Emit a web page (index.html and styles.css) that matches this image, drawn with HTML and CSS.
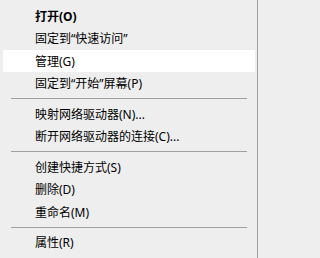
FILE: index.html
```html
<!DOCTYPE html>
<html lang="zh-CN">
<head>
<meta charset="utf-8">
<link rel="stylesheet" href="styles.css">
</head>
<body>
<div class="menu">
  <div class="item bold">打开(O)</div>
  <div class="item">固定到“快速访问”</div>
  <div class="item hover">管理(G)</div>
  <div class="item">固定到“开始”屏幕(P)</div>
  <div class="sep"></div>
  <div class="item">映射网络驱动器(N)...</div>
  <div class="item">断开网络驱动器的连接(C)...</div>
  <div class="sep"></div>
  <div class="item">创建快捷方式(S)</div>
  <div class="item">删除(D)</div>
  <div class="item">重命名(M)</div>
  <div class="sep"></div>
  <div class="item">属性(R)</div>
</div>
</body>
</html>
```

FILE: styles.css
```css
html, body {
  margin: 0;
  padding: 0;
  background: #eeeeee;
  overflow: hidden;
}
.menu {
  width: 258px;
  height: 258px;
  box-sizing: border-box;
  padding: 4.5px 2px 0 3px;
  border-right: 1px solid #a0a0a0;
  background: #eeeeee;
  font-family: "Noto Sans", "Noto Sans CJK SC", sans-serif;
  font-size: 12px;
  color: #000;
}
.item {
  height: 22.5px;
  display: flex;
  align-items: center;
  padding-left: 32px;
  white-space: nowrap;
}
.bold {
  font-weight: bold;
}
.hover {
  background: #ffffff;
}
.sep {
  height: 1px;
  background: #a0a0a0;
  margin: 3.5px 8px;
}
```
